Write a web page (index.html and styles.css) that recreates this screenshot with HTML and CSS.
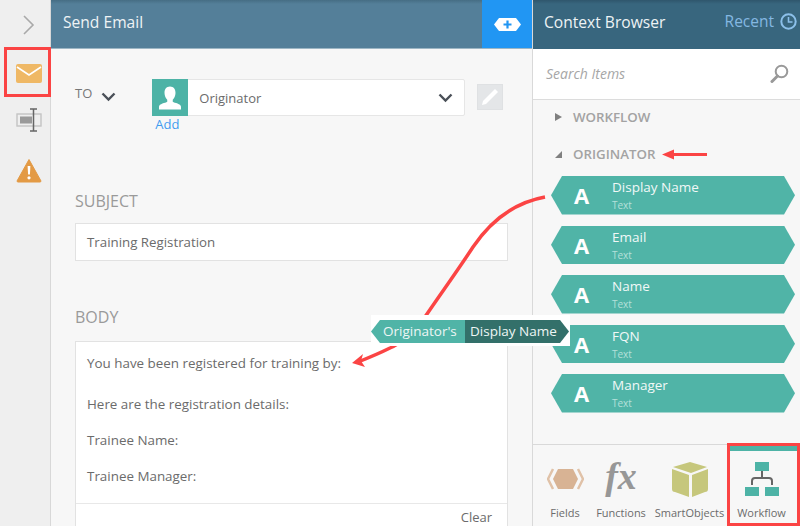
FILE: index.html
```html
<!DOCTYPE html>
<html lang="en">
<head>
  <meta charset="UTF-8" />
  <title>Send Email</title>
  <link rel="stylesheet" href="styles.css">
</head>
<body>
  <div class="app">
    <div class="rail">
      <svg class="rail-arrow" width="12" height="20" viewBox="0 0 12 20"><path d="M1 1l9 9-9 9" fill="none" stroke="#a9a9a9" stroke-width="1.6"/></svg>
      <svg class="rail-mail" width="26" height="19" viewBox="0 0 26 19"><rect width="26" height="19" rx="2" fill="#efb865"/><path d="M1 3l12 8 12-8" fill="none" stroke="#fff" stroke-width="1.6"/></svg>
      <svg class="rail-field" width="26" height="24" viewBox="0 0 26 24"><rect x="1" y="6" width="24" height="12" fill="none" stroke="#c4c4c4" stroke-width="1.4"/><rect x="4" y="8.500" width="12" height="7" fill="#9a9a9a"/><path d="M14 1h7M17.500 1v22M14 23h7" fill="none" stroke="#666" stroke-width="1.5"/></svg>
      <svg class="rail-warn" width="26" height="25" viewBox="0 0 26 25"><path d="M13 1.500L25 23a1 1 0 0 1-1 1H2a1 1 0 0 1-1-1z" fill="#e39a45" stroke="#e39a45" stroke-linejoin="round"/><path d="M11.600 8h2.800l-.5 8.500h-1.800z" fill="#fff"/><circle cx="13" cy="19.800" r="1.600" fill="#fff"/></svg>
    </div>

    <div class="main">
      <div class="main-header">
        <span class="header-title">Send Email</span>
        <div class="add-btn">
          <svg width="27" height="13" viewBox="0 0 27 13"><path d="M5 0h17l5 6.500-5 6.500H5L0 6.500z" fill="#fff"/><path d="M13.500 2.500v8M9.500 6.500h8" stroke="#2196f3" stroke-width="2.200"/></svg>
        </div>
      </div>

      <div class="main-body">
        <div class="to-row">
          <span class="to-label">TO</span>
          <svg class="chevron to-chevron" width="15" height="10" viewBox="0 0 15 10"><path d="M1.500 1.500l6 6 6-6" fill="none" stroke="#4a5058" stroke-width="2.400"/></svg>
          <div class="to-field">
            <div class="select">
              <div class="avatar">
                <svg width="22" height="24" viewBox="0 0 24 25"><path d="M12 0c4 0 6 3 6 7 0 3-1.500 6-3 7.500v2c2 1.500 9 2 9 5.500v3H0v-3c0-3.500 7-4 9-5.500v-2C7.500 13 6 10 6 7c0-4 2-7 6-7z" fill="#fff"/></svg>
              </div>
              <span class="select-text">Originator</span>
              <svg class="chevron" width="15" height="10" viewBox="0 0 15 10"><path d="M1.500 1.500l6 6 6-6" fill="none" stroke="#4a5058" stroke-width="2.400"/></svg>
            </div>
            <a class="add-link">Add</a>
          </div>
          <div class="edit-btn">
            <svg width="18" height="18" viewBox="0 0 18 18"><path d="M14 1l3 3L5 16l-4 1 1-4z" fill="#fff"/></svg>
          </div>
        </div>

        <div class="section-label subject-label">SUBJECT</div>
        <div class="text-input">Training Registration</div>

        <div class="section-label body-label">BODY</div>
        <div class="body-box">
          <div class="body-text">
            <p class="line-first">You have been registered for training by:</p>
            <p class="line-second">Here are the registration details:</p>
            <p>Trainee Name:</p>
            <p>Trainee Manager:</p>
          </div>
          <div class="body-footer">Clear</div>
        </div>
      </div>
    </div>

    <div class="side">
      <div class="side-header">
        <span class="header-title">Context Browser</span>
        <span class="recent">Recent
          <svg width="17" height="17" viewBox="0 0 17 17"><circle cx="8.500" cy="8.500" r="7.200" fill="none" stroke="#8cc0ea" stroke-width="2"/><path d="M8.500 4v5h4" fill="none" stroke="#8cc0ea" stroke-width="1.600"/></svg>
        </span>
      </div>
      <div class="search">
        <span class="search-text">Search Items</span>
        <svg width="19" height="19" viewBox="0 0 19 19"><circle cx="11.500" cy="7.500" r="5.800" fill="none" stroke="#999" stroke-width="2"/><path d="M7.500 12l-5.500 5.500" stroke="#999" stroke-width="3" stroke-linecap="round"/></svg>
      </div>
      <div class="tree">
        <div class="tree-row tree-row-workflow"><span class="tri-right"></span>WORKFLOW</div>
        <div class="tree-row"><span class="tri-open"></span>ORIGINATOR</div>
        <div class="items">
          <div class="item"><span class="item-a">A</span><div class="item-text"><span class="item-name">Display Name</span><span class="item-type">Text</span></div></div>
          <div class="item"><span class="item-a">A</span><div class="item-text"><span class="item-name">Email</span><span class="item-type">Text</span></div></div>
          <div class="item"><span class="item-a">A</span><div class="item-text"><span class="item-name">Name</span><span class="item-type">Text</span></div></div>
          <div class="item"><span class="item-a">A</span><div class="item-text"><span class="item-name">FQN</span><span class="item-type">Text</span></div></div>
          <div class="item"><span class="item-a">A</span><div class="item-text"><span class="item-name">Manager</span><span class="item-type">Text</span></div></div>
        </div>
      </div>
      <div class="tabs">
        <div class="tab tab-fields">
          <svg class="tab-icon" width="37" height="22" viewBox="0 0 37 22"><path d="M11 1h15l5 10-5 10H11L6 11z" fill="#d8b394"/><path d="M6 1L1 11l5 10M31 1l5 10-5 10" fill="none" stroke="#e0c2a8" stroke-width="2.500"/></svg>
          <span>Fields</span>
        </div>
        <div class="tab tab-functions">
          <span class="fx">fx</span>
          <span>Functions</span>
        </div>
        <div class="tab tab-objects">
          <svg class="tab-icon" width="36" height="36" viewBox="0 0 36 36"><path d="M18 0l17 5-16 6L1 5z" fill="#c6c77c"/><path d="M0 7l17 6v22L3 30a3 3 0 0 1-3-3z" fill="#c6c77c"/><path d="M36 7L20 13v22l13-5a3 3 0 0 0 3-3z" fill="#c6c77c"/></svg>
          <span>SmartObjects</span>
        </div>
        <div class="tab tab-workflow">
          <svg class="tab-icon" width="34" height="34" viewBox="0 0 34 34"><rect x="10" width="14" height="9" fill="#4db3a6"/><path d="M17 9v7M7 23v-4a3 3 0 0 1 3-3h14a3 3 0 0 1 3 3v4" fill="none" stroke="#666" stroke-width="2"/><rect y="25" width="14" height="9" fill="#4db3a6"/><rect x="20" y="25" width="14" height="9" fill="#4db3a6"/></svg>
          <span>Workflow</span>
        </div>
      </div>
    </div>

    <!-- annotations on top of the screenshot -->
    <svg class="notes" width="800" height="526" viewBox="0 0 800 526">
      <rect x="5.500" y="48.500" width="44" height="47" fill="none" stroke="#fb4444" stroke-width="3"/>
      <rect x="728.500" y="444.500" width="70" height="80" fill="none" stroke="#fb4444" stroke-width="3"/>
      <path d="M662 154.500l12-5v3.500h33v3h-33v3.500z" fill="#fb4444"/>
      <path d="M545 197C512 203 490 222 473 247C458 270 442 292 427 314C417 330 400 344 390 348C378 354 368 358 358 362" fill="none" stroke="#fb4444" stroke-width="3.500"/>
      <path d="M352 363l11-9-2 7 4 6z" fill="#fb4444"/>
    </svg>
    <div class="tag">
      <span class="tag-left">Originator's</span><span class="tag-right">Display Name</span>
    </div>
  </div>
</body>
</html>
```

FILE: styles.css
```css
* {
  box-sizing: border-box;
}
body {
  margin: 0;
  font-family: 'Open Sans', sans-serif;
  color: #6b6b6b;
}
p {
  margin: 0;
}
.app {
  position: relative;
  display: flex;
  width: 800px;
  height: 526px;
  overflow: hidden;
  background: #f7f7f7;
}

/* left rail */
.rail {
  width: 51px;
  flex: none;
  display: flex;
  flex-direction: column;
  align-items: center;
  background: #efefef;
  border-right: 1px solid #d8d8d8;
}
.rail-arrow { margin: 15px 0 0 7px; }
.rail-mail { margin: 29px 0 0 7px; }
.rail-field { margin: 25px 0 0 7px; }
.rail-warn { margin: 26px 0 0 7px; }

/* main column */
.main {
  width: 482px;
  flex: none;
  display: flex;
  flex-direction: column;
  border-right: 1px solid #d9d9d9;
}
.main-header {
  height: 49px;
  flex: none;
  display: flex;
  align-items: center;
  justify-content: space-between;
  padding-left: 12px;
  background: linear-gradient(to bottom, #466d84 0, #547f99 4px);
  border-bottom: 1px solid #9db6c4;
}
.header-title {
  margin-bottom: 4px;
  font-size: 15.600px;
  color: #eef3f5;
}
.add-btn {
  width: 50px;
  height: 48px;
  display: flex;
  align-items: center;
  justify-content: center;
  background: #2196f3;
}
.main-body {
  flex: 1;
  min-height: 0;
  padding: 30px 24px 0 24px;
}
.to-row {
  display: flex;
  align-items: flex-start;
}
.to-label {
  font-size: 13px;
  line-height: 19px;
  margin-top: 5px;
  color: #777;
}
.to-chevron {
  margin: 13px 0 0 9px;
}
.to-field {
  width: 313px;
  margin-left: 36px;
}
.select {
  height: 37px;
  display: flex;
  align-items: center;
  background: #fff;
  border: 1px solid #e6e6e6;
  border-radius: 2px;
  padding-right: 11px;
}
.avatar {
  width: 36px;
  height: 37px;
  margin: -1px 0 -1px -1px;
  display: flex;
  align-items: center;
  justify-content: center;
  background: #4db3a6;
}
.select-text {
  flex: 1;
  font-size: 13px;
  margin-left: 11px;
}
.add-link {
  display: block;
  margin-top: 1px;
  margin-left: 3px;
  font-size: 13px;
  line-height: 15px;
  color: #3f9cf0;
}
.edit-btn {
  width: 26px;
  height: 26px;
  margin: 5px 0 0 12px;
  display: flex;
  align-items: center;
  justify-content: center;
  background: #e4e6e8;
  border: 1px solid #dfe1e3;
}
.section-label {
  font-size: 16px;
  line-height: 22px;
  color: #9a9a9a;
}
.subject-label { margin-top: 58px; }
.body-label { margin-top: 45px; }
.text-input {
  height: 38px;
  margin-top: 11px;
  padding-left: 11px;
  display: flex;
  align-items: center;
  font-size: 13.300px;
  background: #fff;
  border: 1px solid #e2e2e2;
}
.body-box {
  height: 185px;
  margin-top: 13px;
  background: #fff;
  border: 1px solid #e2e2e2;
  border-bottom: none;
}
.body-text {
  height: 162px;
  padding: 11px 11px 0 11px;
  font-size: 13.400px;
  line-height: 20px;
  border-bottom: 1px solid #e8e8e8;
}
.body-text p { margin-bottom: 16px; }
.body-text .line-first { margin-bottom: 21px; }
.body-footer {
  padding: 4px 15px 0 0;
  text-align: right;
  font-size: 13px;
  line-height: 18px;
}

/* context browser */
.side {
  flex: 1;
  min-width: 0;
  display: flex;
  flex-direction: column;
}
.side-header {
  height: 49px;
  flex: none;
  display: flex;
  align-items: center;
  justify-content: space-between;
  padding: 0 3px 0 11px;
  background: linear-gradient(to bottom, #2f566c 0, #38667e 4px);
  border-bottom: 1px solid #38667e;
}
.recent {
  display: flex;
  align-items: center;
  gap: 6px;
  margin-bottom: 6px;
  font-size: 15.500px;
  color: #84b8e2;
}
.search {
  height: 51px;
  flex: none;
  display: flex;
  align-items: center;
  justify-content: space-between;
  padding: 0 11px 2px 13px;
  background: #fff;
  border-bottom: 1px solid #dcdcdc;
}
.search-text {
  font-size: 14px;
  font-style: italic;
  color: #a6a6a6;
}
.tree {
  flex: 1;
  min-height: 0;
  display: flex;
  flex-direction: column;
  padding-top: 7px;
}
.tree-row {
  display: flex;
  align-items: center;
  height: 20px;
  margin-bottom: 17px;
  padding-left: 22px;
  font-size: 13.300px;
  font-weight: 600;
  color: #a3a3a3;
}
.tri-right {
  width: 0;
  height: 0;
  margin-right: 11px;
  border-left: 7px solid #808080;
  border-top: 4.500px solid transparent;
  border-bottom: 4.500px solid transparent;
}
.tri-open {
  width: 0;
  height: 0;
  margin-right: 11px;
  border-left: 7px solid transparent;
  border-bottom: 7px solid #808080;
}
.items {
  display: flex;
  flex-direction: column;
  gap: 11px;
  margin-top: -5px;
  padding: 0 5px 0 18px;
}
.item {
  height: 38.500px;
  flex: none;
  display: flex;
  align-items: center;
  background: #50b4a7;
  clip-path: polygon(11px 0, calc(100% - 11px) 0, 100% 50%, calc(100% - 11px) 100%, 11px 100%, 0 50%);
}
.item-a {
  width: 61px;
  padding-left: 23px;
  font-size: 22px;
  font-weight: 700;
  color: #fff;
}
.item-text {
  display: flex;
  flex-direction: column;
  padding-top: 1px;
}
.item-name {
  font-size: 13.500px;
  line-height: 19px;
  color: #f1f8f7;
}
.item-type {
  font-size: 10px;
  line-height: 16px;
  color: #b5e0da;
}
.tabs {
  height: 82px;
  flex: none;
  display: flex;
  background: #f7f7f7;
  border-top: 1px solid #d9d9d9;
}
.tab {
  position: relative;
  display: flex;
  flex-direction: column;
  align-items: center;
  font-size: 11px;
  color: #6b6b6b;
}
.tab span:last-child {
  position: absolute;
  top: 60px;
  white-space: nowrap;
}
.tab-fields { width: 50px; margin-left: 7px; }
.tab-fields .tab-icon { margin-top: 23px; }
.tab-functions { width: 58px; margin-left: 2px; }
.fx {
  margin-top: 11px;
  font-family: 'Liberation Serif', serif;
  font-style: italic;
  font-weight: 700;
  font-size: 38px;
  line-height: 40px;
  color: #979797;
}
.tab-objects { width: 69px; margin-left: 5px; }
.tab-objects .tab-icon { margin-top: 17px; }
.tab-workflow {
  width: 68px;
  margin-left: 6px;
  padding-right: 5px;
  border-top: 6px solid #4db3a6;
}
.tab-workflow .tab-icon { margin-top: 11px; }
.tab-workflow span:last-child { top: 54px; }

/* annotations */
.notes {
  position: absolute;
  top: 0;
  left: 0;
}
.tag {
  position: absolute;
  top: 315px;
  left: 371px;
  width: 199px;
  height: 31px;
  display: flex;
  align-items: flex-start;
  padding-top: 5px;
  background: #fff;
  font-size: 13.500px;
  line-height: 23px;
  color: #eef6f5;
}
.tag-left {
  width: 94px;
  height: 23px;
  padding-left: 12px;
  background: #50b4a7;
  clip-path: polygon(9px 0, 100% 0, 100% 100%, 9px 100%, 0 50%);
}
.tag-right {
  width: 104px;
  height: 23px;
  padding-left: 5px;
  background: #33706a;
  clip-path: polygon(0 0, calc(100% - 9px) 0, 100% 50%, calc(100% - 9px) 100%, 0 100%);
}
```
